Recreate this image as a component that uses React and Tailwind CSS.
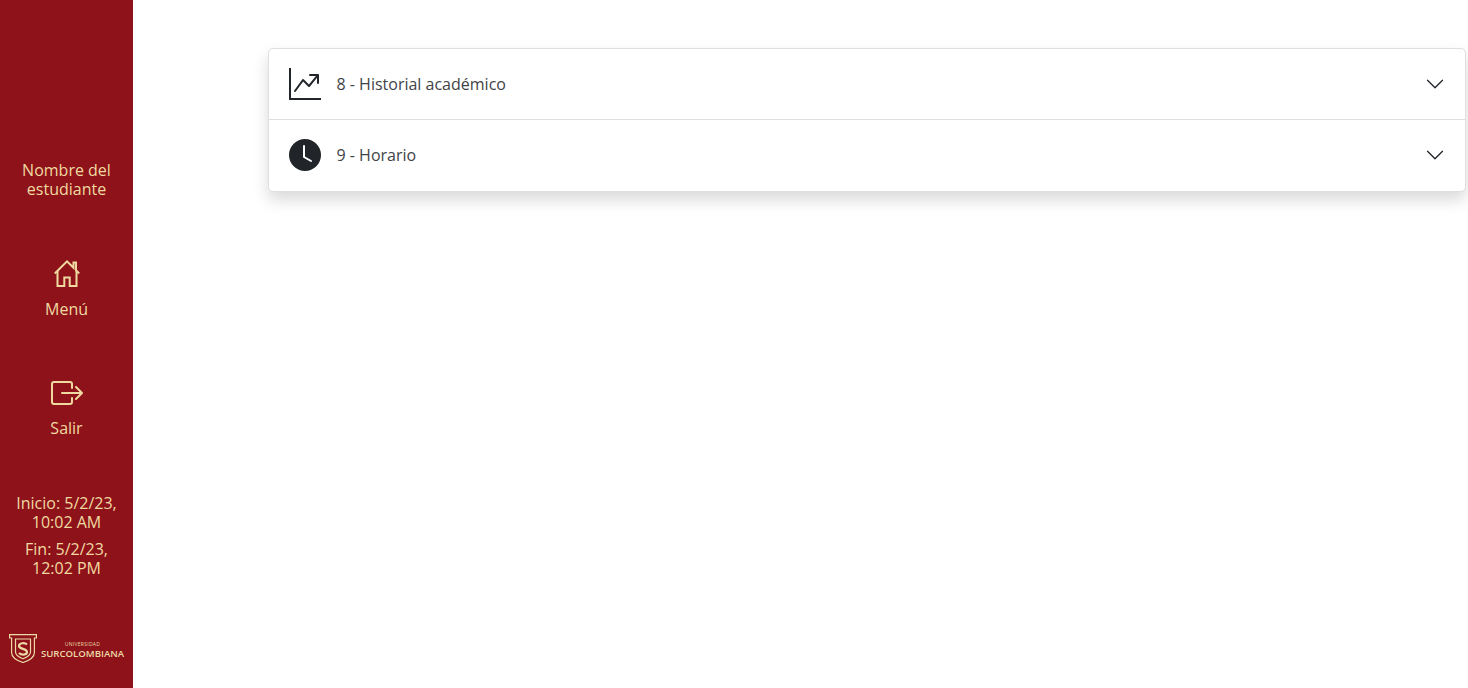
import React from 'react';
import { BsGraphUpArrow, BsClockFill, BsBoxArrowRight } from 'react-icons/bs';

const items = [
  { label: '8 - Historial académico', Icon: BsGraphUpArrow, height: 'h-[70px]' },
  { label: '9 - Horario', Icon: BsClockFill, height: 'h-[72px] pb-[1px] border-t border-[#dfdfdf]' },
];

const Chevron = () => (
  <svg viewBox="0 0 16 16" className="h-5 w-5 text-[#212529]" fill="currentColor">
    <path fillRule="evenodd" d="M1.646 4.646a.5.5 0 0 1 .708 0L8 10.293l5.646-5.647a.5.5 0 0 1 .708.708l-6 6a.5.5 0 0 1-.708 0l-6-6a.5.5 0 0 1 0-.708z" />
  </svg>
);

const HomeIcon = () => (
  <svg viewBox="0 0 30 30" className="h-[30px] w-[30px]" fill="none" stroke="currentColor" strokeWidth="2">
    <path d="M2.800 15.500 15 3.300l6.500 6.500V4.500h2.500v7.800l3.200 3.200" />
    <path d="M5.500 13v15h6.800v-8.500h5.400V28h6.800V13" />
  </svg>
);

const Logo = () => (
  <div className="flex items-center gap-[4px] text-[#ecd9a4]">
    <svg viewBox="0 0 28 29" className="h-[29px] w-[28px]" fill="none" stroke="currentColor">
      <path d="M.6.6h26.800v3.400h-2v14.500c0 5-5 8-11.400 10C7.600 26.500 2.600 23.500 2.600 18.500V4H.6z" strokeWidth="1.200" />
      <path d="M6.500 5h15v13c0 3-3 5-7.500 6.800C9.500 23 6.500 21 6.500 18z" strokeWidth="1.200" />
      <path d="M18 10.500c-2-2-8-1.800-8 1.500s8 2.500 8 6-6 3-8 1" strokeWidth="2.200" />
    </svg>
    <div className="flex flex-col pt-[3px] leading-none">
      <span className="mb-[2px] text-[5px] font-medium tracking-[0.3px]">UNIVERSIDAD</span>
      <span className="text-[9.600px] font-semibold">SURCOLOMBIANA</span>
    </div>
  </div>
);

export default function App() {
  return (
    <div className="flex h-[688px] bg-white font-['Open_Sans',sans-serif] text-base">
      <aside className="flex w-[133px] shrink-0 flex-col items-center bg-[#8d121a] pt-[161px] text-center leading-[19px] text-[#f0d9a0]">
        <p className="w-[100px]">Nombre del estudiante</p>

        <a className="mt-[59px] flex flex-col items-center gap-[10px]">
          <HomeIcon />
          <span className="leading-[22px]">Menú</span>
        </a>

        <a className="mt-[57px] flex flex-col items-center gap-[8px]">
          <BsBoxArrowRight className="h-[32px] w-[32px]" />
          <span className="leading-[22px]">Salir</span>
        </a>

        <div className="mt-[55px] flex flex-col gap-2">
          <p className="w-[110px]">Inicio: 5/2/23, 10:02 AM</p>
          <p className="w-[110px]">Fin: 5/2/23, 12:02 PM</p>
        </div>

        <div className="mt-[56px]">
          <Logo />
        </div>
      </aside>

      <main className="flex-1 pl-[135px] pr-[2px] pt-[48px]">
        <div className="rounded-[5px] border border-[#dfdfdf] bg-white shadow-[0_8px_16px_rgba(0,0,0,0.15)]">
          {items.map(({ label, Icon, height }) => (
            <div key={label} className={`flex items-center pl-[19.500px] pr-[20px] text-[#3f4347] ${height}`}>
              <Icon className="mr-4 h-8 w-8 text-[#212529]" />
              <span className="flex-1">{label}</span>
              <Chevron />
            </div>
          ))}
        </div>
      </main>
    </div>
  );
}
